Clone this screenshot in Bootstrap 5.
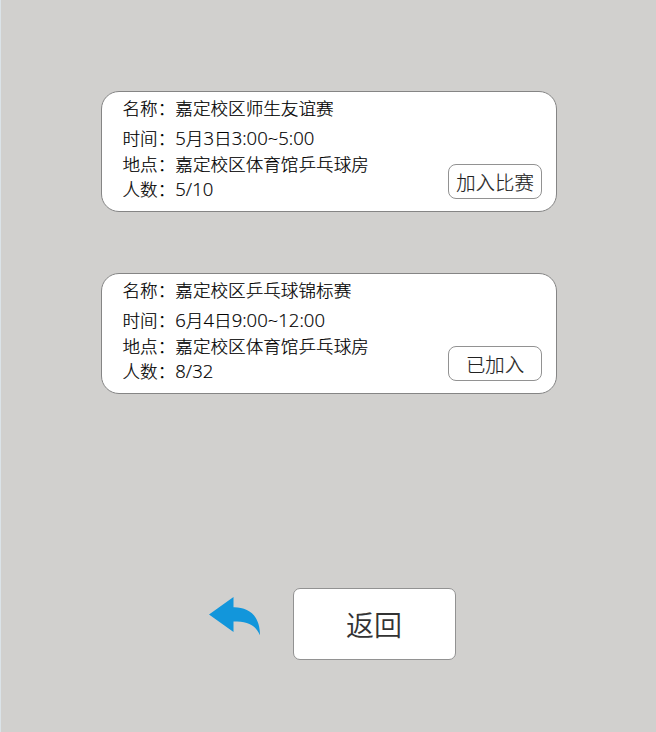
<!DOCTYPE html>
<html lang="zh-CN">
<head>
<meta charset="utf-8">
<title>比赛列表</title>
<link rel="stylesheet" href="https://cdn.jsdelivr.net/npm/bootstrap@5.3.0/dist/css/bootstrap.min.css">
<style>
body{background:#d1d0ce;color:#000;height:732px;padding:91px 99px 0 100px;border-left:1px solid #dbe3e8;font-family:"Open Sans","Noto Sans CJK SC",sans-serif}
.match{height:121px;border:1.5px solid #858585;border-radius:18px;background:#fff;padding:0 14px 12px 20.5px;margin-bottom:61px}
.info{font-size:17.6px;font-weight:300;-webkit-text-stroke:.2px #000;white-space:nowrap;padding-top:3px}
.info div{height:25.5px;line-height:26px}
.info div:first-child{height:30px}
.digits{font-size:18.5px}
.join{width:94px;height:35px;border:1px solid #929292;border-radius:8px;padding:0;font-size:19.4px;font-weight:300;-webkit-text-stroke:.15px #222;line-height:36px;color:#222;white-space:nowrap}
.back{width:163px;height:72px;border:1px solid #929292;border-radius:7px;background:#fff;font-size:28px;font-weight:350;color:#333;padding:1px 1px 0 0}
.foot{padding:133px 0 0 108px;gap:32px}
</style>
</head>
<body>
<section class="match d-flex justify-content-between align-items-end">
<div class="info align-self-start"><div>名称：嘉定校区师生友谊赛</div><div>时间：<span class="digits">5</span>月<span class="digits">3</span>日<span class="digits">3:00~5:00</span></div><div>地点：嘉定校区体育馆乒乓球房</div><div>人数：<span class="digits">5/10</span></div></div>
<button class="btn join">加入比赛</button>
</section>
<section class="match d-flex justify-content-between align-items-end">
<div class="info align-self-start"><div>名称：嘉定校区乒乓球锦标赛</div><div>时间：<span class="digits">6</span>月<span class="digits">4</span>日<span class="digits">9:00~12:00</span></div><div>地点：嘉定校区体育馆乒乓球房</div><div>人数：<span class="digits">8/32</span></div></div>
<button class="btn join">已加入</button>
</section>
<div class="foot d-flex align-items-start">
<svg class="mt-2" width="52" height="40" viewBox="0 0 52 40" aria-hidden="true"><path fill="#1296db" d="M0 18.5 24.5 1V11.3C39 11 51 19 51 39.3 46 28 38 25.5 24.5 25.5V36Z"/></svg>
<button class="btn back">返回</button>
</div>
<script src="https://cdn.jsdelivr.net/npm/bootstrap@5.3.0/dist/js/bootstrap.bundle.min.js"></script>
</body>
</html>
